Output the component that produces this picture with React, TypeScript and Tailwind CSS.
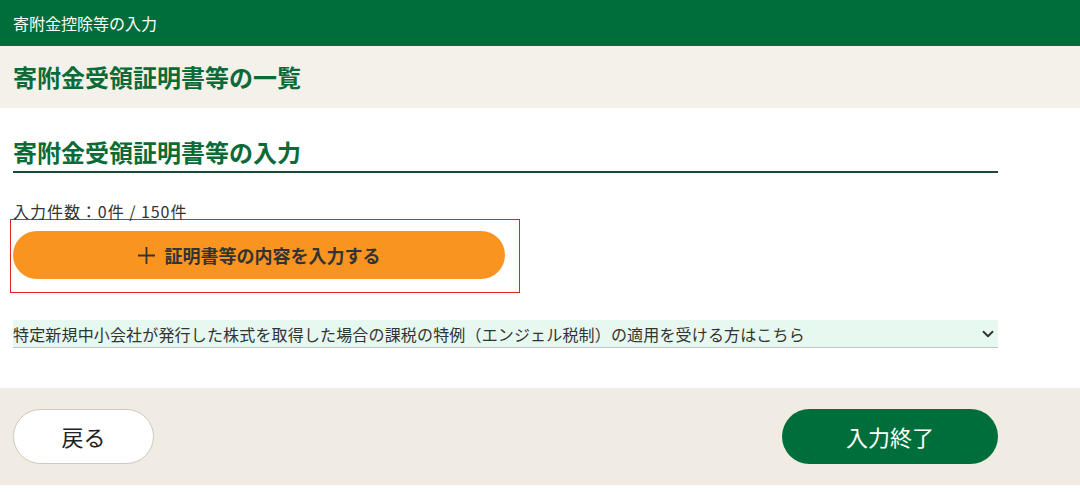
import { ChevronDown } from 'lucide-react';

const font = { fontFamily: '"Noto Sans CJK JP", "Noto Sans", sans-serif' };

export default function App() {
  return (
    <div className="w-[1080px] h-[500px] bg-white text-[#333]" style={font}>
      {/* Header */}
      <div className="h-[46px] bg-[#006e3b] flex items-center px-[13px]">
        <span className="text-[16px] text-white">寄附金控除等の入力</span>
      </div>

      {/* Page title */}
      <div className="h-[62px] bg-[#f3f1ea] flex items-center px-[13px]">
        <h1 className="text-[24px] font-bold text-[#0a6b37]">寄附金受領証明書等の一覧</h1>
      </div>

      {/* Body */}
      <div className="h-[280px] px-[13px] pt-[29px]">
        <div className="w-[985px]">
          <h2 className="text-[24px] font-bold text-[#0a6b37] leading-[30px] pb-[4px] border-b-2 border-[#1d4a33]">
            寄附金受領証明書等の入力
          </h2>
          <div className="mt-[27px] text-[16px] leading-[22px] tracking-[0.06em]">入力件数：0件 / 150件</div>
          <div className="-ml-[3px] mt-[-3px] w-[510px] h-[74px] border border-[#e0212b] pl-[2px] pt-[11px]">
            <button className="w-[492px] h-[48px] rounded-full bg-[#f8941f] flex items-center justify-center gap-[10px] text-[18px] font-bold text-[#333]">
              <svg width="17" height="17" viewBox="0 0 17 17" className="shrink-0">
                <path d="M8.5 0v17M0 8.5h17" stroke="#333" strokeWidth="1.8" />
              </svg>
              証明書等の内容を入力する
            </button>
          </div>
          <div className="mt-[27px] h-[28px] bg-[#e6f8ef] border-b border-[#c4c4c4] flex items-center justify-between pr-[1px]">
            <span className="text-[16px] text-[#333] tracking-[0.01em]">
              特定新規中小会社が発行した株式を取得した場合の課税の特例（エンジェル税制）の適用を受ける方はこちら
            </span>
            <ChevronDown className="w-[18px] h-[18px] text-[#333]" strokeWidth={2.5} />
          </div>
        </div>
      </div>

      {/* Footer */}
      <div className="h-[97px] bg-[#f0ece3] px-[13px] pt-[21px]">
        <div className="w-[985px] flex justify-between">
          <button className="w-[141px] h-[55px] rounded-full bg-white border border-[#cfc9bd] text-[22px] text-[#222]">
            戻る
          </button>
          <button className="w-[216px] h-[55px] rounded-full bg-[#006e3b] text-[22px] text-white">
            入力終了
          </button>
        </div>
      </div>
    </div>
  );
}
